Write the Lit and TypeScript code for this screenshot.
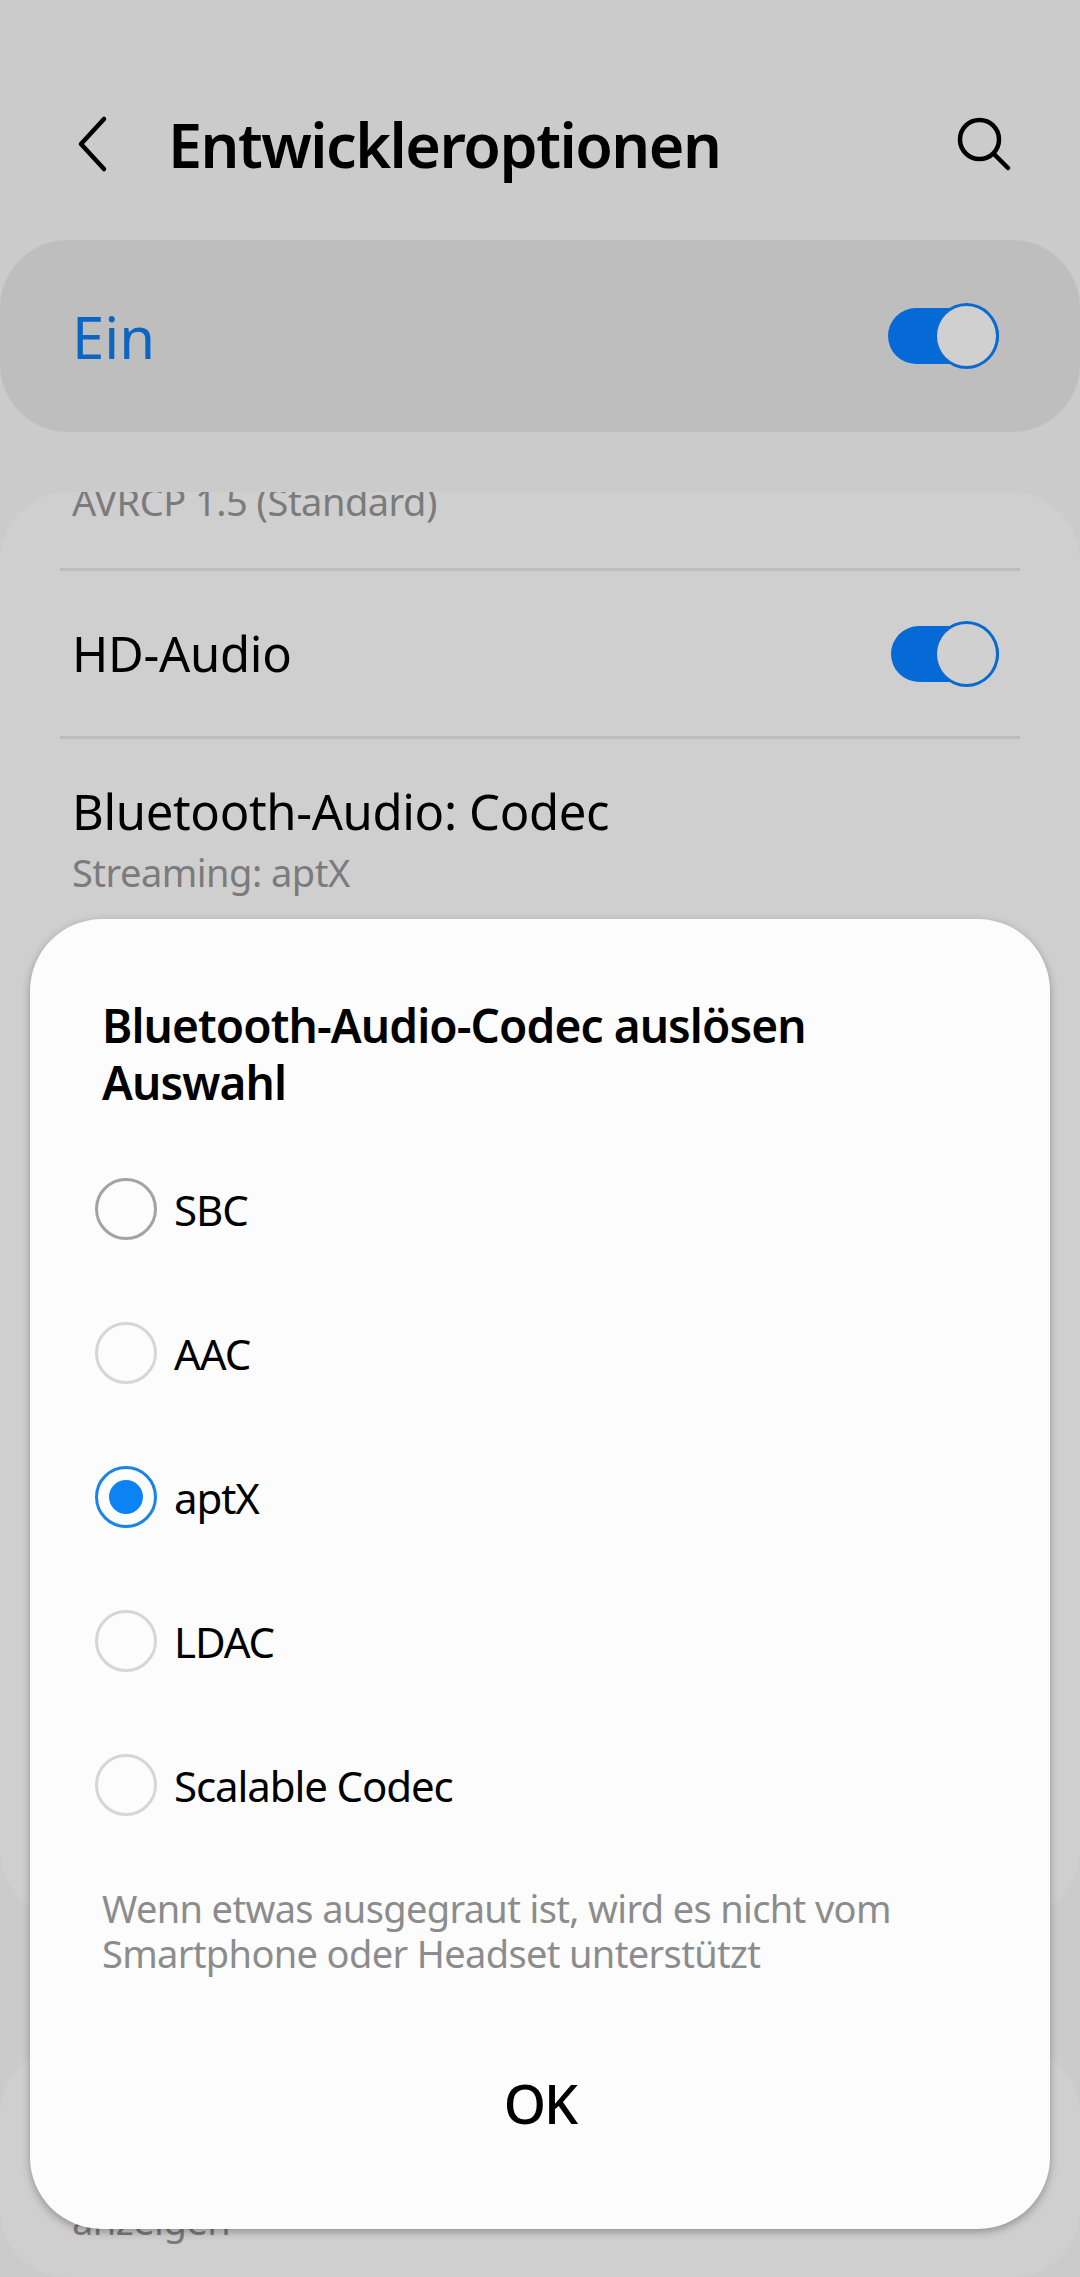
import { LitElement, html, css } from 'lit'
import { customElement } from 'lit/decorators.js'

const CODECS = [
  { name: 'SBC', state: 'enabled' },
  { name: 'AAC', state: 'disabled' },
  { name: 'aptX', state: 'checked' },
  { name: 'LDAC', state: 'disabled' },
  { name: 'Scalable Codec', state: 'disabled' },
]

@customElement('app-root')
export class AppRoot extends LitElement {
  static styles = css`
    :host {
      display: block;
      position: relative;
      width: 1080px;
      height: 2277px;
      overflow: hidden;
      background: #cbcbcb;
      font-family: "Noto Sans", "Liberation Sans", sans-serif;
      font-weight: 370;
      color: #000;
    }
    .appbar {
      height: 240px;
      box-sizing: border-box;
      padding: 48px 65px 0 72px;
      display: flex;
      align-items: center;
      gap: 56px;
    }
    .back {
      flex: none;
      width: 40px;
      height: 60px;
    }
    .title {
      flex: 1;
      font-size: 61px;
      font-weight: 600;
      letter-spacing: -1.5px;
    }
    .search {
      flex: none;
      width: 60px;
      height: 60px;
    }
    .master {
      height: 192px;
      box-sizing: border-box;
      padding: 0 81px 0 72px;
      background: #bebebe;
      border-radius: 68px;
      display: flex;
      align-items: center;
      justify-content: space-between;
      font-size: 58px;
      color: #0a66c2;
    }
    .toggle {
      position: relative;
      display: block;
      width: 111px;
      height: 56px;
      border-radius: 28px;
      background: #056ad5;
    }
    .toggle.narrow {
      width: 108px;
    }
    .toggle::after {
      content: "";
      position: absolute;
      box-sizing: border-box;
      right: 0;
      top: -5px;
      width: 65px;
      height: 66px;
      border-radius: 50%;
      border: 3px solid #0a6ad0;
      background: #d0d0d0;
    }
    .card {
      margin-top: 60px;
      background: #cfcfcf;
      border-radius: 68px;
      overflow: hidden;
    }
    .card.settings {
      height: 1425px;
    }
    .card.next {
      margin-top: 129px;
      height: 231px;
      box-sizing: border-box;
      padding-top: 149px;
    }
    .row {
      margin: 0 60px;
      padding: 0 12px;
      border-bottom: 3px solid #bdbdbd;
    }
    .row.clipped {
      display: flow-root;
      height: 76px;
    }
    .row.clipped .sub {
      margin-top: -16px;
    }
    .row.switch {
      height: 165px;
      display: flex;
      align-items: center;
      justify-content: space-between;
      padding-right: 21px;
      font-size: 49px;
      letter-spacing: -0.3px;
    }
    .row.switch span:first-child {
      margin-top: -2px;
    }
    .row.plain {
      border-bottom: 0;
      padding-top: 41px;
    }
    .main {
      font-size: 49px;
      line-height: 62px;
      letter-spacing: -0.35px;
    }
    .sub {
      font-size: 38px;
      line-height: 50px;
      letter-spacing: -0.5px;
      color: #7b7b7b;
    }
    .row.plain .sub {
      margin-top: 5px;
    }
    .dialog {
      position: absolute;
      left: 30px;
      top: 919px;
      width: 1020px;
      height: 1310px;
      box-sizing: border-box;
      padding: 78px 72px 0;
      background: #fcfcfc;
      border-radius: 72px;
      box-shadow: 0 3px 8px rgba(0, 0, 0, 0.3);
    }
    .dialog-title {
      font-size: 46px;
      line-height: 57px;
      font-weight: 560;
      letter-spacing: -0.9px;
    }
    .options {
      margin: 67px 0 0 -7px;
      display: flex;
      flex-direction: column;
      gap: 82px;
    }
    .option {
      height: 62px;
      display: flex;
      align-items: center;
      gap: 17px;
      font-size: 42px;
      letter-spacing: -1.1px;
    }
    .radio {
      flex: none;
      box-sizing: border-box;
      width: 62px;
      height: 62px;
      border-radius: 50%;
      border: 3px solid #d6d6d6;
      display: flex;
      align-items: center;
      justify-content: center;
    }
    .radio.enabled {
      border-color: #a3a3a3;
    }
    .radio.checked {
      border-color: #1a84e6;
    }
    .radio.checked::after {
      content: "";
      width: 34px;
      height: 34px;
      border-radius: 50%;
      background: #0b83f5;
    }
    .note {
      margin-top: 70px;
      font-size: 38px;
      line-height: 45px;
      letter-spacing: -0.65px;
      color: #8c8c8c;
    }
    .ok {
      margin-top: 90px;
      text-align: center;
      font-size: 54px;
      font-weight: 500;
      letter-spacing: -2px;
    }
    .next-text {
      margin: 0 72px;
      font-size: 38px;
      line-height: 50px;
      letter-spacing: -0.5px;
      color: #7b7b7b;
    }
  `

  render() {
    return html`
      <div class="appbar">
        <svg class="back" viewBox="0 0 40 60" fill="none" stroke="#000" stroke-width="4.5" stroke-linecap="round" stroke-linejoin="round">
          <path d="M32 5 L9 30 L32 55"></path>
        </svg>
        <div class="title">Entwickleroptionen</div>
        <svg class="search" viewBox="0 0 60 60" fill="none" stroke="#000" stroke-width="4.5" stroke-linecap="round">
          <circle cx="24.5" cy="25.5" r="19.5"></circle>
          <path d="M40 41 L53 54"></path>
        </svg>
      </div>
      <div class="master">
        <span>Ein</span>
        <span class="toggle"></span>
      </div>
      <div class="card settings">
        <div class="row clipped"><div class="sub">AVRCP 1.5 (Standard)</div></div>
        <div class="row switch">
          <span>HD-Audio</span>
          <span class="toggle narrow"></span>
        </div>
        <div class="row plain">
          <div class="main">Bluetooth-Audio: Codec</div>
          <div class="sub">Streaming: aptX</div>
        </div>
      </div>
      <div class="card next">
        <div class="next-text">anzeigen</div>
      </div>
      <div class="dialog">
        <div class="dialog-title">Bluetooth-Audio-Codec auslösen<br />Auswahl</div>
        <div class="options">
          ${CODECS.map(c => html`
            <div class="option">
              <span class="radio ${c.state}"></span>
              <span>${c.name}</span>
            </div>
          `)}
        </div>
        <div class="note">Wenn etwas ausgegraut ist, wird es nicht vom<br />Smartphone oder Headset unterstützt</div>
        <div class="ok">OK</div>
      </div>
    `
  }
}
